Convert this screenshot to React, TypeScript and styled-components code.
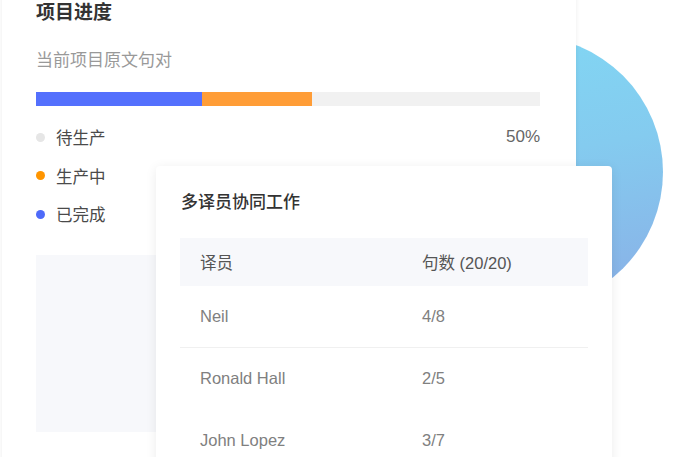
import styled, { createGlobalStyle } from 'styled-components';

const GlobalStyle = createGlobalStyle`
	* {
		box-sizing: border-box;
	}

	body {
		margin: 0;
		background: #ffffff;
		font-family: 'Liberation Sans', 'Noto Sans CJK SC', sans-serif;
	}
`;

interface Segment {
	color: string;
	width: number;
}

interface LegendItem {
	label: string;
	color: string;
	value?: string;
}

interface Translator {
	name: string;
	count: string;
}

const segments: Segment[] = [
	{ color: '#5470fd', width: 166 },
	{ color: '#ff9d37', width: 110 },
];

const legend: LegendItem[] = [
	{ label: '待生产', color: '#e6e6e6', value: '50%' },
	{ label: '生产中', color: '#ff9500' },
	{ label: '已完成', color: '#4e6af9' },
];

const translators: Translator[] = [
	{ name: 'Neil', count: '4/8' },
	{ name: 'Ronald Hall', count: '2/5' },
	{ name: 'John Lopez', count: '3/7' },
];

export default function App() {
	return (
		<>
			<GlobalStyle />
			<StyledStage>
				<StyledBubble />
				<StyledCard>
					<StyledTitle>项目进度</StyledTitle>
					<StyledSubtitle>当前项目原文句对</StyledSubtitle>
					<StyledTrack>
						{segments.map(s => (
							<StyledSegment key={s.color} $color={s.color} $width={s.width} />
						))}
					</StyledTrack>
					<StyledLegend>
						{legend.map(item => (
							<StyledLegendRow key={item.label}>
								<StyledDot $color={item.color} />
								<StyledLegendLabel>{item.label}</StyledLegendLabel>
								{item.value && <StyledLegendValue>{item.value}</StyledLegendValue>}
							</StyledLegendRow>
						))}
					</StyledLegend>
					<StyledPlaceholder />
				</StyledCard>
				<StyledPopup>
					<StyledPopupTitle>多译员协同工作</StyledPopupTitle>
					<StyledTable>
						<StyledHeadRow>
							<StyledCell>译员</StyledCell>
							<StyledCell>句数 (20/20)</StyledCell>
						</StyledHeadRow>
						{translators.map((t, i) => (
							<StyledRow key={t.name} $divider={i === 0}>
								<StyledCell>{t.name}</StyledCell>
								<StyledCell>{t.count}</StyledCell>
							</StyledRow>
						))}
					</StyledTable>
				</StyledPopup>
			</StyledStage>
		</>
	);
}

const StyledStage = styled.div`
	position: relative;
	width: 694px;
	height: 457px;
	overflow: hidden;
`;

const StyledBubble = styled.div`
	position: absolute;
	left: 391px;
	top: 36px;
	width: 272px;
	height: 272px;
	border-radius: 50%;
	background: linear-gradient(170deg, #81d8f4 0%, #84cbef 45%, #8aaee6 100%);
`;

const StyledCard = styled.section`
	position: relative;
	width: 574px;
	height: 520px;
	margin: -20px 0 0 2px;
	padding: 20px 36px 0 34px;
	background: #ffffff;
	box-shadow: 0 0 5px rgba(0, 0, 0, 0.08);
`;

const StyledTitle = styled.h2`
	margin: 0;
	font-size: 19px;
	line-height: 26px;
	font-weight: 700;
	color: #333333;
`;

const StyledSubtitle = styled.p`
	margin: 25px 0 0;
	font-size: 17px;
	line-height: 20px;
	color: #999999;
`;

const StyledTrack = styled.div`
	display: flex;
	height: 14px;
	margin-top: 21px;
	background: #f1f1f1;
`;

const StyledSegment = styled.div<{ $color: string; $width: number }>`
	width: ${p => p.$width}px;
	height: 100%;
	background: ${p => p.$color};
`;

const StyledLegend = styled.ul`
	list-style: none;
	margin: 12px 0 0;
	padding: 0;
`;

const StyledLegendRow = styled.li`
	display: flex;
	align-items: center;
	height: 38.5px;
`;

const StyledDot = styled.span<{ $color: string }>`
	width: 9px;
	height: 9px;
	border-radius: 50%;
	background: ${p => p.$color};
`;

const StyledLegendLabel = styled.span`
	margin-left: 11px;
	font-size: 16.5px;
	color: #4a4a4a;
`;

const StyledLegendValue = styled.span`
	margin-left: auto;
	font-size: 17px;
	color: #666666;
`;

const StyledPlaceholder = styled.div`
	height: 177px;
	margin-top: 21.5px;
	background: #f7f8fb;
`;

const StyledPopup = styled.div`
	position: absolute;
	left: 156px;
	top: 166px;
	width: 456px;
	height: 320px;
	padding: 24px 24px 0;
	background: #ffffff;
	border-radius: 4px;
	box-shadow: 0 2px 12px rgba(0, 0, 0, 0.08);
`;

const StyledPopupTitle = styled.h3`
	margin: 0 0 0 1px;
	font-size: 17px;
	line-height: 26px;
	font-weight: 500;
	color: #333333;
`;

const StyledTable = styled.div`
	margin-top: 22px;
`;

const StyledHeadRow = styled.div`
	display: grid;
	grid-template-columns: 222px 1fr;
	align-items: center;
	height: 48px;
	background: #f7f8fb;
	color: #555555;
`;

const StyledRow = styled.div<{ $divider: boolean }>`
	display: grid;
	grid-template-columns: 222px 1fr;
	align-items: center;
	height: 62px;
	color: #808080;
	border-bottom: 1px solid ${p => (p.$divider ? '#f0f0f0' : 'transparent')};
`;

const StyledCell = styled.span`
	padding-left: 20px;
	font-size: 16.5px;
`;
